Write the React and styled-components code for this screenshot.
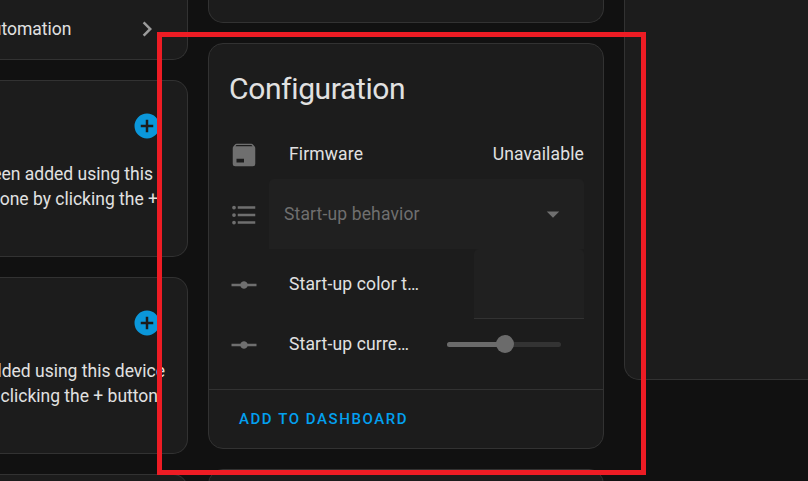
import React from "react";
import styled, { createGlobalStyle } from "styled-components";

const GlobalStyle = createGlobalStyle`
  * { box-sizing: border-box; }
  body {
    margin: 0;
    background: #111111;
    color: #e1e1e1;
    font-family: Roboto, "Liberation Sans", sans-serif;
    font-size: 17.5px;
    overflow: hidden;
  }
`;

const Page = styled.main`
  position: relative;
  display: grid;
  grid-template-columns: 188px 396px 184px;
  column-gap: 20px;
  width: 808px;
  height: 481px;
  overflow: hidden;
`;

const Column = styled.div`
  display: flex;
  flex-direction: column;
  gap: 20px;
  min-width: 0;
`;

const Card = styled.section`
  flex: none;
  display: flex;
  flex-direction: column;
  height: ${(p) => p.$height}px;
  background: #1c1c1c;
  border: 1px solid #323232;
  border-radius: ${(p) => (p.$cut ? "0 0 15px 15px" : "15px")};
  ${(p) => p.$cut && "border-top: 0;"}
`;

const SideCard = styled(Card)`
  border-left: 0;
  border-radius: ${(p) => (p.$cut ? "0 0 15px 0" : "0 15px 15px 0")};
`;

const WideCard = styled(Card)`
  border-right: 0;
  border-radius: 0 0 0 15px;
`;

const AutomationRow = styled.div`
  display: flex;
  align-items: center;
  justify-content: flex-end;
  gap: 60.5px;
  height: 58px;
  padding-right: 25px;
  white-space: nowrap;
`;

const SideHeader = styled.div`
  display: flex;
  justify-content: flex-end;
  padding: 30px 25px 0 0;
  color: #0b97da;
`;

const SideText = styled.div`
  margin-top: 21px;
`;

const SideLine = styled.div`
  display: flex;
  justify-content: flex-end;
  width: ${(p) => p.$end}px;
  line-height: 25px;
  white-space: nowrap;
`;

const Svg = styled.svg`
  flex: none;
  display: block;
  width: 30px;
  height: 30px;
  fill: currentColor;
`;

const Title = styled.h1`
  margin: 0;
  padding: 15px 20px 10px;
  height: 85px;
  font-size: 30px;
  font-weight: 400;
  line-height: 60px;
  letter-spacing: -0.36px;
`;

const Rows = styled.div`
  flex: 1;
  padding: 0 19px 0 20px;
  letter-spacing: 0.15px;
`;

const Row = styled.div`
  display: flex;
  align-items: center;
  height: ${(p) => p.$height}px;
`;

const RowIcon = styled.div`
  padding-top: 2px;
  color: #6f6f6f;
`;

const Label = styled.div`
  flex: 1;
  margin-left: 30px;
  line-height: 25px;
  white-space: nowrap;
`;

const SelectBox = styled.div`
  flex: 1;
  display: flex;
  align-items: center;
  justify-content: space-between;
  height: 70px;
  margin-left: 10px;
  padding: 0 16px 0 15px;
  background: #202020;
  border-radius: 5px 5px 0 0;
  color: #6f6f6f;
`;

const NumberBox = styled.div`
  width: 110px;
  height: 70px;
  background: #202020;
  border-bottom: 1px solid #323232;
  border-radius: 5px 5px 0 0;
`;

const Track = styled.div`
  display: flex;
  align-items: center;
  width: 114px;
  height: 5px;
  margin-right: 23px;
  border-radius: 3px;
  background: #333333;
`;

const TrackFill = styled.div`
  width: 50px;
  height: 5px;
  border-radius: 3px 0 0 3px;
  background: #6b6b6b;
`;

const Knob = styled.div`
  flex: none;
  width: 18px;
  height: 18px;
  margin-left: -1.5px;
  border-radius: 50%;
  background: #6b6b6b;
`;

const Footer = styled.footer`
  display: flex;
  align-items: center;
  height: 59px;
  padding-left: 30px;
  border-top: 1px solid #323232;
`;

const TextButton = styled.button`
  padding: 0;
  border: 0;
  background: none;
  color: #03a0f0;
  font: 500 15px/20px Roboto, "Liberation Sans", sans-serif;
  letter-spacing: 1.56px;
  text-transform: uppercase;
`;

const Highlight = styled.div`
  position: absolute;
  left: 157px;
  top: 32px;
  width: 489px;
  height: 443px;
  border: 5px solid #ed1c24;
  pointer-events: none;
`;

const paths = {
  chevron: "M8.59,16.58L13.17,12L8.59,7.41L10,6L16,12L10,18L8.59,16.58Z",
  plus: "M17,13H13V17H11V13H7V11H11V7H13V11H17M12,2A10,10 0 0,0 2,12A10,10 0 0,0 12,22A10,10 0 0,0 22,12A10,10 0 0,0 12,2Z",
  box: "M5.12,5H18.87L17.93,4H5.93L5.12,5M20.54,5.23C20.83,5.57 21,6 21,6.5V19A2,2 0 0,1 19,21H5A2,2 0 0,1 3,19V6.5C3,6 3.17,5.57 3.46,5.23L4.84,3.55C5.12,3.21 5.53,3 6,3H18C18.47,3 18.88,3.21 19.15,3.55L20.54,5.23M6,18H12V15H6V18Z",
  list: "M7,5H21V7H7V5M7,13V11H21V13H7M4,4.5A1.5,1.5 0 0,1 5.5,6A1.5,1.5 0 0,1 4,7.5A1.5,1.5 0 0,1 2.5,6A1.5,1.5 0 0,1 4,4.5M4,10.5A1.5,1.5 0 0,1 5.5,12A1.5,1.5 0 0,1 4,13.5A1.5,1.5 0 0,1 2.5,12A1.5,1.5 0 0,1 4,10.5M7,19V17H21V19H7M4,16.5A1.5,1.5 0 0,1 5.5,18A1.5,1.5 0 0,1 4,19.5A1.5,1.5 0 0,1 2.5,18A1.5,1.5 0 0,1 4,16.5Z",
  vertex: "M2,11H9.17C9.58,9.83 10.69,9 12,9C13.31,9 14.42,9.83 14.83,11H22V13H14.83C14.42,14.17 13.31,15 12,15C10.69,15 9.58,14.17 9.17,13H2V11Z",
  caret: "M7,10L12,15L17,10H7Z",
};

const ChevronSvg = styled(Svg)`
  color: #9b9b9b;
`;

function Icon({ name, as: Component = Svg }) {
  return (
    <Component viewBox="0 0 24 24" aria-hidden="true">
      <path d={paths[name]} />
    </Component>
  );
}

function EntityRow({ icon, height, children }) {
  return (
    <Row $height={height}>
      <RowIcon>
        <Icon name={icon} />
      </RowIcon>
      {children}
    </Row>
  );
}

function AddCard({ lines }) {
  return (
    <SideCard $height={177}>
      <SideHeader>
        <Icon name="plus" />
      </SideHeader>
      <SideText>
        {lines.map(([text, end]) => (
          <SideLine key={text} $end={end}>{text}</SideLine>
        ))}
      </SideText>
    </SideCard>
  );
}

export default function App() {
  return (
    <>
      <GlobalStyle />
      <Page>
        <Column>
          <SideCard $height={60} $cut>
            <AutomationRow>
              utomation
              <Icon name="chevron" as={ChevronSvg} />
            </AutomationRow>
          </SideCard>
          <AddCard lines={[["een added using this", 153], ["one by clicking the +", 158]]} />
          <AddCard lines={[["dded using this device", 165], ["clicking the + button", 158]]} />
          <SideCard $height={60} />
        </Column>

        <Column>
          <Card $height={23} $cut />
          <Card $height={406}>
            <Title>Configuration</Title>
            <Rows>
              <EntityRow icon="box" height={50}>
                <Label>Firmware</Label>
                <span>Unavailable</span>
              </EntityRow>
              <EntityRow icon="list" height={70}>
                <SelectBox>
                  Start-up behavior
                  <Icon name="caret" />
                </SelectBox>
              </EntityRow>
              <EntityRow icon="vertex" height={70}>
                <Label>Start-up color t…</Label>
                <NumberBox />
              </EntityRow>
              <EntityRow icon="vertex" height={50}>
                <Label>Start-up curre…</Label>
                <Track>
                  <TrackFill />
                  <Knob />
                </Track>
              </EntityRow>
            </Rows>
            <Footer>
              <TextButton>Add to dashboard</TextButton>
            </Footer>
          </Card>
          <Card $height={60} />
        </Column>

        <Column>
          <WideCard $height={380} $cut />
        </Column>
        <Highlight />
      </Page>
    </>
  );
}
